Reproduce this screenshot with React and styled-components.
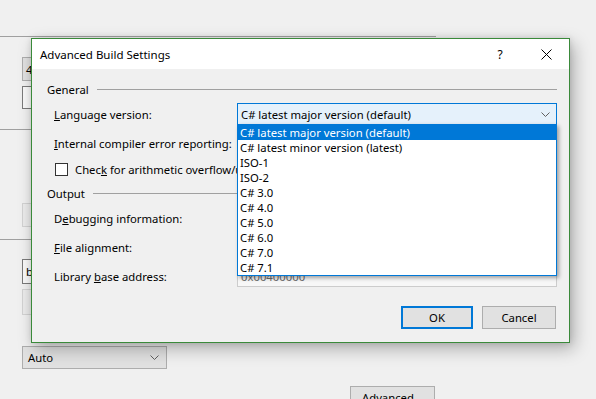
import styled, { createGlobalStyle } from "styled-components";

const GlobalStyle = createGlobalStyle`
  html, body {
    margin: 0;
    padding: 0;
  }
  body {
    background: #f0f0f0;
    font-family: "Noto Sans", "Open Sans", sans-serif;
    font-size: 11.3px;
    color: #000;
  }
`;

const LANG_OPTIONS = [
  "C# latest major version (default)",
  "C# latest minor version (latest)",
  "ISO-1",
  "ISO-2",
  "C# 3.0",
  "C# 4.0",
  "C# 5.0",
  "C# 6.0",
  "C# 7.0",
  "C# 7.1",
];

const Chevron = ({ color = "#606060" }) => (
  <svg width="9" height="5" viewBox="0 0 9 5">
    <path d="M0.5 0.5 L4.5 4.5 L8.5 0.5" fill="none" stroke={color} strokeWidth="1" />
  </svg>
);

const CloseIcon = () => (
  <svg width="11" height="11" viewBox="0 0 11 11">
    <path d="M0.5 0.5 L10.5 10.5 M10.5 0.5 L0.5 10.5" fill="none" stroke="#000" strokeWidth="1" />
  </svg>
);

const App = () => {
  return (
    <>
      <GlobalStyle />
      <Page>
        <BackWindow>
          <Separator $top={36} />
          <BackField $top={20} $variant="combo">4</BackField>
          <BackField $top={5} $variant="text" $height={23} />
          <Separator $top={20} />
          <BackField $top={73} $variant="disabled" />
          <Separator $top={12} />
          <BackField $top={19} $variant="text" $height={25}>bin\Debug\</BackField>
          <BackField $top={5} $variant="disabled" $height={26} />
          <BackCombo>
            <span>Auto</span>
            <Chevron />
          </BackCombo>
          <BackButtonRow>
            <BackButton>Advanced...</BackButton>
          </BackButtonRow>
        </BackWindow>

        <Dialog>
          <TitleBar>
            <Title>Advanced Build Settings</Title>
            <TitleButtons>
              <HelpButton>?</HelpButton>
              <CloseButton>
                <CloseIcon />
              </CloseButton>
            </TitleButtons>
          </TitleBar>

          <Body>
            <GroupHeader $height={20}>
              <span>General</span>
              <GroupLine />
            </GroupHeader>

            <FormRow $height={30}>
              <Label>
                <U>L</U>anguage version:
              </Label>
              <ComboCell>
                <Combo $active>
                  <span>C# latest major version (default)</span>
                  <Chevron />
                </Combo>
                <DropList>
                  {LANG_OPTIONS.map((opt, i) => (
                    <DropItem key={opt} $selected={i === 0}>
                      {opt}
                    </DropItem>
                  ))}
                </DropList>
              </ComboCell>
            </FormRow>

            <FormRow $height={28}>
              <Label>
                <U>I</U>nternal compiler error reporting:
              </Label>
              <Combo>
                <span />
                <Chevron />
              </Combo>
            </FormRow>

            <CheckRow>
              <CheckBox />
              <CheckLabel>
                Chec<U>k</U> for arithmetic overflow/underflow
              </CheckLabel>
            </CheckRow>

            <GroupHeader $height={24}>
              <span>Output</span>
              <GroupLine />
            </GroupHeader>

            <FormRow $height={27}>
              <Label>
                D<U>e</U>bugging information:
              </Label>
              <Combo>
                <span />
                <Chevron />
              </Combo>
            </FormRow>

            <FormRow $height={30}>
              <Label>
                <U>F</U>ile alignment:
              </Label>
              <Combo>
                <span />
                <Chevron />
              </Combo>
            </FormRow>

            <FormRow $height={28}>
              <Label>
                Library <U>b</U>ase address:
              </Label>
              <TextBox>0x00400000</TextBox>
            </FormRow>

            <Footer>
              <DialogButton $default>OK</DialogButton>
              <DialogButton>Cancel</DialogButton>
            </Footer>
          </Body>
        </Dialog>
      </Page>
    </>
  );
};

const Page = styled.div`
  position: relative;
  width: 596px;
  height: 399px;
  overflow: hidden;
  background: #f0f0f0;
`;

const BackWindow = styled.div`
  display: flex;
  flex-direction: column;
  align-items: flex-start;
`;

const Separator = styled.div`
  width: 436px;
  height: 1px;
  margin-top: ${(p) => p.$top}px;
  background: #a0a0a0;
`;

const BackField = styled.div`
  box-sizing: border-box;
  width: 140px;
  height: ${(p) => p.$height || 24}px;
  margin-top: ${(p) => p.$top}px;
  margin-left: 22px;
  padding-left: 3px;
  display: flex;
  align-items: center;
  background: ${(p) =>
    p.$variant === "combo" ? "#e1e1e1" : p.$variant === "disabled" ? "#ebebeb" : "#f9f9f9"};
  border: 1px solid
    ${(p) =>
      p.$variant === "combo" ? "#adadad" : p.$variant === "disabled" ? "#d2d2d2" : "#7a7a7a"};
`;

const BackCombo = styled.div`
  box-sizing: border-box;
  width: 145px;
  height: 23px;
  margin-top: 31px;
  margin-left: 22px;
  padding: 0 7px 0 5px;
  display: flex;
  align-items: center;
  justify-content: space-between;
  background: #e1e1e1;
  border: 1px solid #adadad;
`;

const BackButtonRow = styled.div`
  margin-top: 17px;
  padding-left: 350px;
`;

const BackButton = styled.div`
  box-sizing: border-box;
  width: 85px;
  height: 23px;
  display: flex;
  justify-content: center;
  padding-top: 3px;
  background: #e1e1e1;
  border: 1px solid #adadad;
`;

const Dialog = styled.div`
  position: absolute;
  left: 31px;
  top: 38px;
  width: 539px;
  height: 305px;
  box-sizing: border-box;
  border: 1px solid #3a8a3a;
  background: #f0f0f0;
  box-shadow: 4px 6px 16px rgba(0, 0, 0, 0.28), 0 0 6px rgba(0, 0, 0, 0.12);
  display: flex;
  flex-direction: column;
`;

const TitleBar = styled.div`
  height: 30px;
  background: #fff;
  display: flex;
  align-items: center;
  justify-content: space-between;
  padding-left: 8px;
`;

const Title = styled.div`
  font-size: 11.5px;
`;

const TitleButtons = styled.div`
  display: flex;
  align-items: center;
`;

const HelpButton = styled.div`
  width: 46px;
  height: 30px;
  display: flex;
  align-items: center;
  justify-content: center;
  font-size: 12px;
`;

const CloseButton = styled.div`
  width: 46px;
  height: 30px;
  display: flex;
  align-items: center;
  justify-content: center;
`;

const Body = styled.div`
  flex: 1;
  display: flex;
  flex-direction: column;
  padding: 10px 12px 0 15px;
`;

const GroupHeader = styled.div`
  height: ${(p) => p.$height}px;
  display: flex;
  align-items: center;
  gap: 8px;
`;

const GroupLine = styled.div`
  flex: 1;
  height: 1px;
  background: #a0a0a0;
`;

const FormRow = styled.div`
  height: ${(p) => p.$height}px;
  display: grid;
  grid-template-columns: 190px 320px;
  align-items: center;
`;

const Label = styled.div`
  padding-left: 7px;
  white-space: nowrap;
`;

const U = styled.span`
  text-decoration: underline;
`;

const ComboCell = styled.div`
  position: relative;
`;

const Combo = styled.div`
  box-sizing: border-box;
  height: 22px;
  padding: 0 6px 0 3px;
  display: flex;
  align-items: center;
  justify-content: space-between;
  background: ${(p) => (p.$active ? "#e5f1fb" : "#e1e1e1")};
  border: 1px solid ${(p) => (p.$active ? "#0078d7" : "#adadad")};
`;

const DropList = styled.div`
  position: absolute;
  left: 0;
  top: 21px;
  width: 320px;
  box-sizing: border-box;
  border: 1px solid #0078d7;
  background: #fff;
  box-shadow: 2px 2px 4px rgba(0, 0, 0, 0.35);
  z-index: 2;
`;

const DropItem = styled.div`
  height: 15px;
  line-height: 15px;
  padding-left: 2px;
  white-space: nowrap;
  background: ${(p) => (p.$selected ? "#0078d7" : "transparent")};
  color: ${(p) => (p.$selected ? "#fff" : "#000")};
`;

const CheckRow = styled.div`
  height: 24px;
  display: flex;
  align-items: center;
  gap: 7px;
  padding-left: 8px;
  white-space: nowrap;
`;

const CheckBox = styled.div`
  width: 13px;
  height: 13px;
  box-sizing: border-box;
  border: 1px solid #333;
  background: #fff;
`;

const CheckLabel = styled.span``;

const TextBox = styled.div`
  box-sizing: border-box;
  height: 22px;
  padding: 0 3px;
  display: flex;
  align-items: center;
  background: #f7f7f7;
  border: 1px solid #cccccc;
  color: #6d6d6d;
`;

const Footer = styled.div`
  display: flex;
  justify-content: flex-end;
  gap: 9px;
  padding-top: 16px;
  padding-right: 1px;
`;

const DialogButton = styled.div`
  box-sizing: border-box;
  width: ${(p) => (p.$default ? 72 : 74)}px;
  height: 23px;
  display: flex;
  align-items: center;
  justify-content: center;
  background: #e1e1e1;
  border: ${(p) => (p.$default ? "2px solid #0078d7" : "1px solid #adadad")};
`;

export default App;
